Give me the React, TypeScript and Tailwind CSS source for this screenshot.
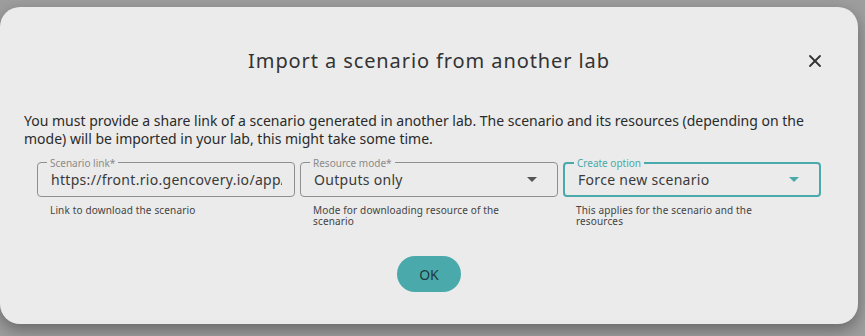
import { X } from "lucide-react";

const font = { fontFamily: '"Noto Sans", "Open Sans", sans-serif' };

function Outlined({
  label,
  value,
  helper,
  select,
  focused,
}: {
  label: string;
  value: string;
  helper: string;
  select?: boolean;
  focused?: boolean;
}) {
  return (
    <div className="flex flex-col">
      <div
        className={`relative flex h-[35px] items-center rounded-[4px] pl-[13px] pr-[12px] ${
          focused ? "border-2 border-[#4aa9aa]" : "border border-[#8f8f8f]"
        }`}
      >
        <span
          className={`absolute left-[9px] bg-[#ebebeb] px-[3px] text-[10px] leading-none ${
            focused ? "top-[-6px] text-[#4aa9aa]" : "top-[-5px] text-[#8a8a8a]"
          }`}
        >
          {label}
        </span>
        <span className="flex-1 overflow-hidden whitespace-nowrap text-[14px] tracking-[0.3px] text-[#3a3a3a]">
          {value}
        </span>
        {select && (
          <svg width="10" height="5" viewBox="0 0 10 5" className="mr-[8px] shrink-0">
            <path d="M0 0 L10 0 L5 5 Z" fill={focused ? "#4aa9aa" : "#555"} />
          </svg>
        )}
      </div>
      <p className="mt-[8px] max-w-[218px] px-[13px] text-[10px] leading-[11px] tracking-[0.15px] text-[#444]">{helper}</p>
    </div>
  );
}

export default function App() {
  return (
    <div className="h-[336px] w-[865px] overflow-hidden bg-[#9e9e9e] pt-[7px]" style={font}>
      <div className="h-[317px] w-[858px] rounded-[20px] bg-[#ebebeb] shadow-[0_6px_16px_rgba(0,0,0,0.35)]">
        <div className="relative flex items-center justify-center pt-[40px]">
          <h2 className="text-[20px] leading-[28px] tracking-[0.9px] text-[#333]">Import a scenario from another lab</h2>
          <X className="absolute right-[33px] top-[44px] h-[20px] w-[20px] text-[#333]" strokeWidth={2.2} />
        </div>
        <p className="mt-[37px] px-[24px] text-[14px] leading-[18px] text-[#2a2a2a]">
          You must provide a share link of a scenario generated in another lab. The scenario and its resources (depending on the mode) will be imported in your lab, this might take some time.
        </p>
        <div className="mt-[14px] grid grid-cols-3 gap-[5px] px-[37px]">
          <Outlined label="Scenario link*" value="https://front.rio.gencovery.io/app/scenario" helper="Link to download the scenario" />
          <Outlined label="Resource mode*" value="Outputs only" helper="Mode for downloading resource of the scenario" select />
          <Outlined label="Create option" value="Force new scenario" helper="This applies for the scenario and the resources" select focused />
        </div>
        <div className="mt-[29px] flex justify-center">
          <button className="h-[36px] w-[64px] rounded-full bg-[#4aa9aa] text-[14px] text-[#1f3b3b]">OK</button>
        </div>
      </div>
    </div>
  );
}
